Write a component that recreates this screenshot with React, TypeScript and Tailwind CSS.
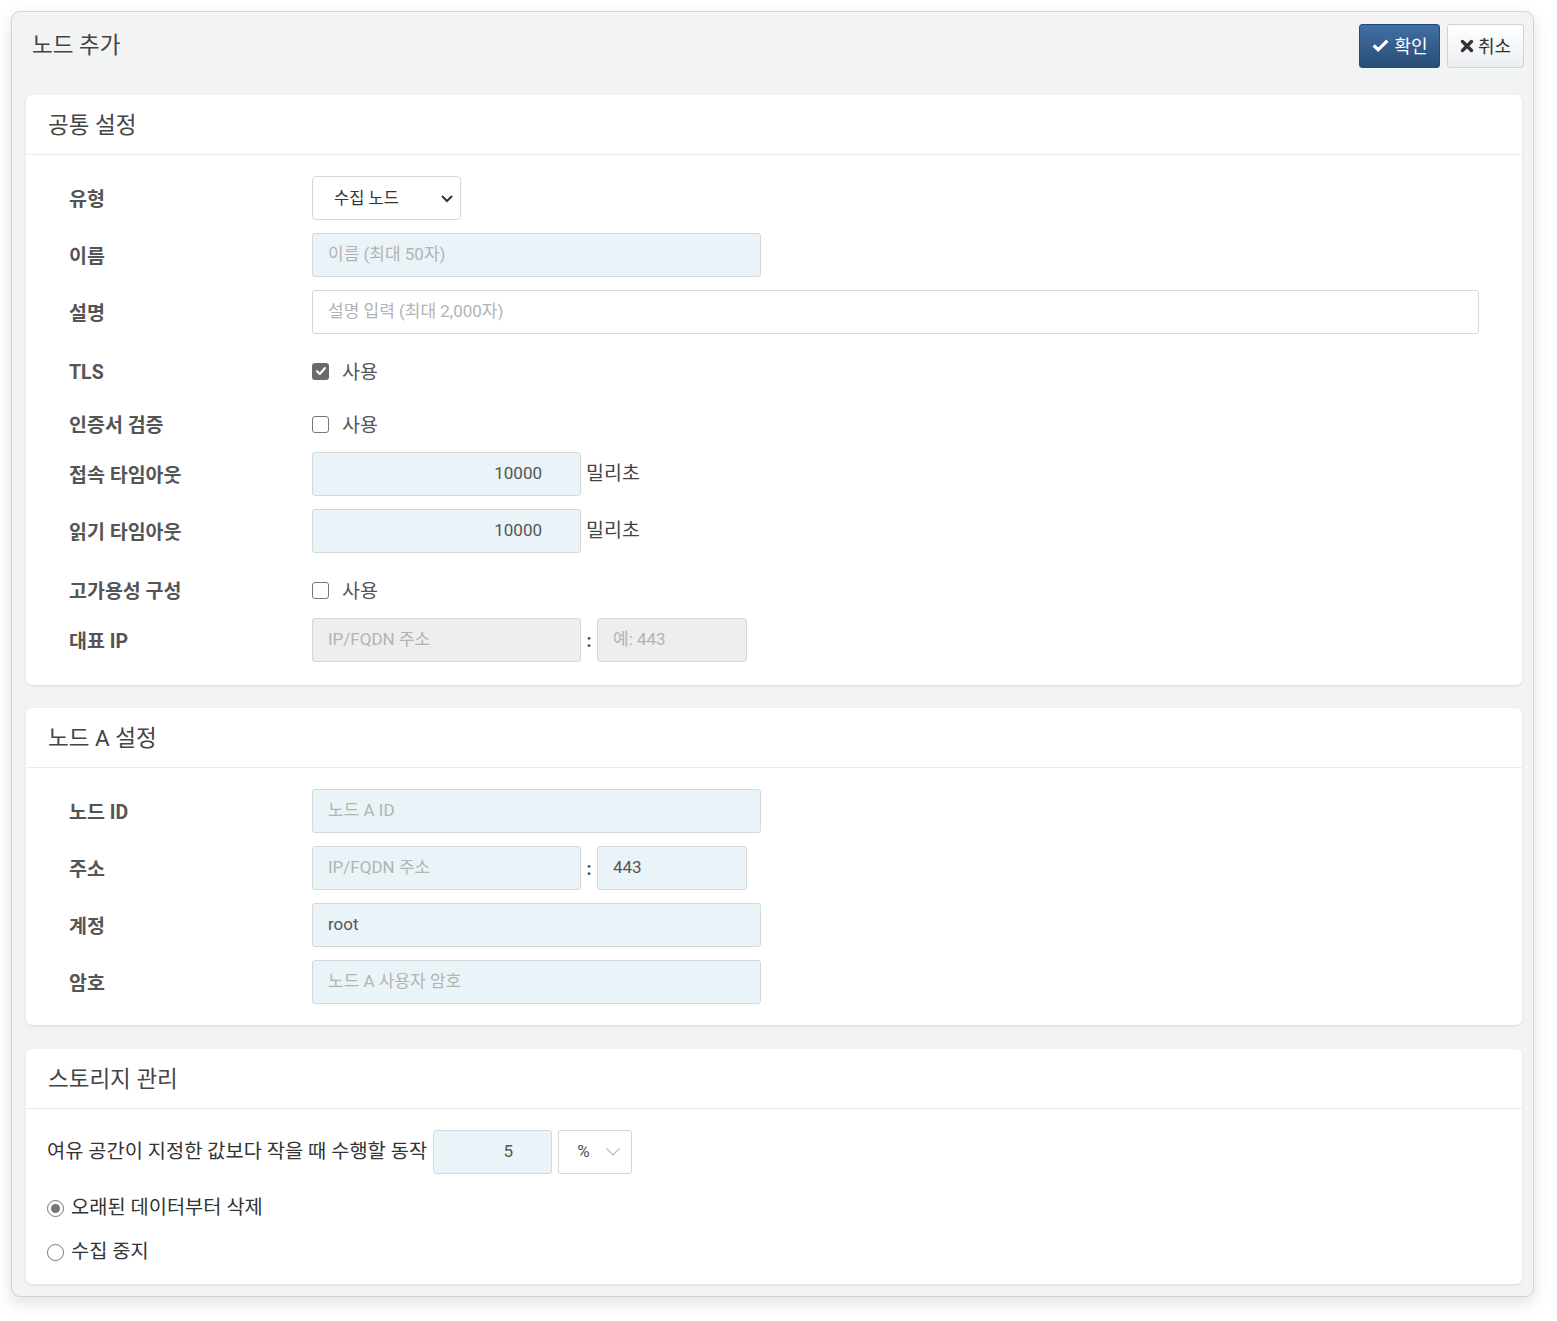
import React from "react";

const font = { fontFamily: 'Roboto, "Noto Sans CJK KR", sans-serif' };

function Label({ children }: { children: React.ReactNode }) {
  return (
    <div className="w-[286px] shrink-0 pl-[43px] pt-[3px] text-[19.5px] font-bold text-[#555]">{children}</div>
  );
}

function Input({
  w,
  placeholder,
  value,
  disabled,
  right,
}: {
  w: string;
  placeholder?: string;
  value?: string;
  disabled?: boolean;
  right?: boolean;
}) {
  return (
    <div
      className={`${w} h-[44px] flex items-center rounded-[3px] border border-[#d3d8db] text-[17px] ${
        disabled ? "bg-[#eeeeee]" : "bg-[#eaf3f7]"
      } ${right ? "justify-end pr-[38px] text-[17.5px]" : "pl-[15px]"}`}
    >
      {value ? (
        <span className="text-[#555]">{value}</span>
      ) : (
        <span className="text-[#b3b3b3]">{placeholder}</span>
      )}
    </div>
  );
}

function Check({ checked }: { checked?: boolean }) {
  return checked ? (
    <span className="w-[17px] h-[17px] rounded-[3px] bg-[#6b6b6b] flex items-center justify-center">
      <svg width="12" height="12" viewBox="0 0 12 12">
        <path d="M2 6.2 L4.8 9 L10 3" stroke="#fff" strokeWidth="2" fill="none" strokeLinecap="round" strokeLinejoin="round" />
      </svg>
    </span>
  ) : (
    <span className="w-[17px] h-[17px] rounded-[3px] border-[1.5px] border-[#767676] bg-white" />
  );
}

function Radio({ checked }: { checked?: boolean }) {
  return (
    <span className="w-[17px] h-[17px] rounded-full border-[1.5px] border-[#767676] bg-white flex items-center justify-center">
      {checked && <span className="w-[9px] h-[9px] rounded-full bg-[#767676]" />}
    </span>
  );
}

function Panel({ title, children, className }: { title: string; children: React.ReactNode; className?: string }) {
  return (
    <div className={`bg-white rounded-[6px] shadow-[0_1px_3px_rgba(0,0,0,0.1)] ${className ?? ""}`}>
      <div className="h-[60px] flex items-center pl-[22px] pt-[2px] text-[22.5px] text-[#444] border-b border-[#ececec]">
        {title}
      </div>
      {children}
    </div>
  );
}

function Use({ checked }: { checked?: boolean }) {
  return (
    <div className="flex items-center gap-[13px] text-[19.5px] text-[#555]">
      <Check checked={checked} />
      <span className="pt-[3px]">사용</span>
    </div>
  );
}

export default function App() {
  return (
    <div className="w-[1557px] h-[1321px] bg-white pt-[11px] pl-[11px]" style={font}>
      <div className="w-[1523px] h-[1286px] rounded-[9px] border border-[#d2d4d4] bg-[#f2f3f3] shadow-[0_6px_16px_rgba(0,0,0,0.12)] pl-[14px] pr-[11px]">
        <div className="h-[83px] flex items-start justify-between">
          <div className="mt-[17px] pl-[6px] text-[22.5px] text-[#444]">노드 추가</div>
          <div className="mt-[12px] -mr-[2px] flex gap-[7px]">
            <button className="w-[81px] h-[44px] rounded-[3px] border border-[#274a72] bg-gradient-to-b from-[#416fa3] to-[#2a4e78] text-white text-[18px] flex items-center justify-center gap-[4px]">
              <svg width="19" height="16" viewBox="0 0 19 16">
                <path d="M1.5 8.5 L3.8 6.2 L7.2 9.4 L15.2 1.5 L17.5 3.8 L7.2 14 Z" fill="#fff" />
              </svg>
              <span>확인</span>
            </button>
            <button className="w-[77px] h-[44px] rounded-[3px] border border-[#d0d3d6] bg-gradient-to-b from-[#ffffff] to-[#eceff2] text-[#333] text-[18px] flex items-center justify-center gap-[4px]">
              <svg width="14" height="14" viewBox="0 0 14 14">
                <path d="M2.5 2.5 L11.5 11.5 M11.5 2.5 L2.5 11.5" stroke="#333" strokeWidth="3.4" strokeLinecap="round" />
              </svg>
              <span>취소</span>
            </button>
          </div>
        </div>

        <Panel title="공통 설정">
          <div className="pt-[21px] pb-[23px]">
            <div className="flex items-center h-[44px]">
              <Label>유형</Label>
              <div className="w-[149px] h-[44px] rounded-[4px] border border-[#d3d8db] bg-white flex items-center justify-between pl-[21px] pr-[6px] text-[16.5px] text-[#333]">
                <span className="pt-[2px]">수집 노드</span>
                <svg width="14" height="10" viewBox="0 0 14 10">
                  <path d="M2 3 L7 8 L12 3" stroke="#333" strokeWidth="2" fill="none" />
                </svg>
              </div>
            </div>
            <div className="flex items-center h-[44px] mt-[13px]">
              <Label>이름</Label>
              <Input w="w-[449px]" placeholder="이름 (최대 50자)" />
            </div>
            <div className="flex items-center h-[44px] mt-[13px]">
              <Label>설명</Label>
              <div className="w-[1167px] h-[44px] rounded-[3px] border border-[#d3d8db] bg-white flex items-center pl-[15px] text-[17px] text-[#b3b3b3]">
                설명 입력 (최대 2,000자)
              </div>
            </div>
            <div className="flex items-center h-[28px] mt-[23px]">
              <Label>TLS</Label>
              <Use checked />
            </div>
            <div className="flex items-center h-[28px] mt-[25px]">
              <Label>인증서 검증</Label>
              <Use />
            </div>
            <div className="flex items-center h-[44px] mt-[14px]">
              <Label>접속 타임아웃</Label>
              <Input w="w-[269px]" value="10000" right />
              <span className="ml-[5px] text-[19.5px] text-[#444]">밀리초</span>
            </div>
            <div className="flex items-center h-[44px] mt-[13px]">
              <Label>읽기 타임아웃</Label>
              <Input w="w-[269px]" value="10000" right />
              <span className="ml-[5px] text-[19.5px] text-[#444]">밀리초</span>
            </div>
            <div className="flex items-center h-[28px] mt-[23px]">
              <Label>고가용성 구성</Label>
              <Use />
            </div>
            <div className="flex items-center h-[44px] mt-[14px]">
              <Label>대표 IP</Label>
              <Input w="w-[269px]" placeholder="IP/FQDN 주소" disabled />
              <span className="w-[16px] text-center text-[18px] font-bold text-[#444]">:</span>
              <Input w="w-[150px]" placeholder="예: 443" disabled />
            </div>
          </div>
        </Panel>

        <Panel title="노드 A 설정" className="mt-[23px]">
          <div className="pt-[21px] pb-[21px]">
            <div className="flex items-center h-[44px]">
              <Label>노드 ID</Label>
              <Input w="w-[449px]" placeholder="노드 A ID" />
            </div>
            <div className="flex items-center h-[44px] mt-[13px]">
              <Label>주소</Label>
              <Input w="w-[269px]" placeholder="IP/FQDN 주소" />
              <span className="w-[16px] text-center text-[18px] font-bold text-[#444]">:</span>
              <Input w="w-[150px]" value="443" />
            </div>
            <div className="flex items-center h-[44px] mt-[13px]">
              <Label>계정</Label>
              <Input w="w-[449px]" value="root" />
            </div>
            <div className="flex items-center h-[44px] mt-[13px]">
              <Label>암호</Label>
              <Input w="w-[449px]" placeholder="노드 A 사용자 암호" />
            </div>
          </div>
        </Panel>

        <Panel title="스토리지 관리" className="mt-[24px]">
          <div className="pt-[21px] pb-[18px] pl-[21px]">
            <div className="flex items-center h-[44px]">
              <span className="text-[19.8px] text-[#333] mr-[6px]">여유 공간이 지정한 값보다 작을 때 수행할 동작</span>
              <Input w="w-[119px]" value="5" right />
              <div className="ml-[6px] w-[74px] h-[44px] rounded-[3px] border border-[#d3d8db] bg-white flex items-center justify-between pl-[18px] pr-[10px] text-[17px] text-[#555]">
                <span>%</span>
                <svg width="16" height="10" viewBox="0 0 16 10">
                  <path d="M1.5 1.5 L8 8 L14.5 1.5" stroke="#bbb" strokeWidth="1.2" fill="none" />
                </svg>
              </div>
            </div>
            <div className="flex items-center gap-[7px] h-[28px] mt-[20px] text-[19.8px] text-[#333]">
              <Radio checked />
              <span>오래된 데이터부터 삭제</span>
            </div>
            <div className="flex items-center gap-[7px] h-[28px] mt-[16px] text-[19.8px] text-[#333]">
              <Radio />
              <span>수집 중지</span>
            </div>
          </div>
        </Panel>
      </div>
    </div>
  );
}
